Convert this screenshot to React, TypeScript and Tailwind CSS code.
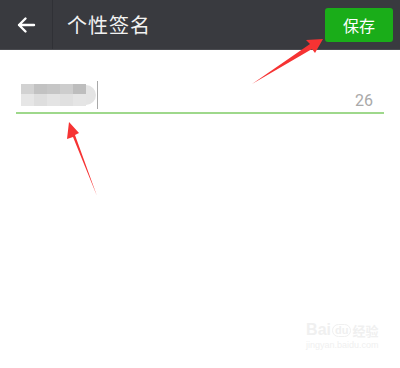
import React from 'react'

const topRow = ['#d2d2d2', '#c2c2c2', '#c6c6c6', '#cdcdcd', '#bdbdbd']
const bottomRow = ['#e6e6e6', '#dedede', '#e4e4e4', '#e0e0e0', '#e5e5e5']

const App = () => {
  return (
    <div className="relative w-[400px] h-[368px] bg-white overflow-hidden font-['Noto_Sans_CJK_SC',sans-serif]">
      <div className="h-[50px] bg-[#393a3f] border-b border-[#4a4b50] flex items-center">
        <div className="w-[53px] h-full flex items-center justify-center border-r border-[#303136]">
          <svg width="20" height="18" viewBox="0 0 20 18" fill="none" stroke="#ffffff" strokeWidth="2.4" strokeLinecap="round" strokeLinejoin="round">
            <path d="M18 9H3M9.5 2.5L3 9l6.5 6.5" />
          </svg>
        </div>
        <span className="ml-[14px] text-[#f2f2f2] text-[20px] tracking-[1px] leading-none">个性签名</span>
        <button className="ml-auto mr-[7px] w-[68px] h-[34px] rounded-[3px] bg-[#1aad19] text-white text-[16px] leading-none">
          保存
        </button>
      </div>

      <div className="mx-[16px] mt-[31px] flex items-end border-b-2 border-[#9ed88b] pb-[3px]">
        <div className="flex items-center ml-[5px]">
          <div className="flex flex-col">
            <div className="flex h-[10px]">
              {topRow.map((c, i) => (
                <div key={i} className="w-[13px]" style={{ backgroundColor: c }} />
              ))}
            </div>
            <div className="flex h-[12px]">
              {bottomRow.map((c, i) => (
                <div key={i} className="w-[13px]" style={{ backgroundColor: c }} />
              ))}
            </div>
          </div>
          <div className="w-[10px] h-[20px] rounded-r-full bg-[#e4e4e4]" />
          <div className="ml-[1px] w-[1px] h-[28px] bg-[#a8a8a8]" />
        </div>
        <span className="ml-auto mr-[11px] text-[16px] leading-none text-[#a9a9a9] font-['Roboto',sans-serif]">26</span>
      </div>

      <svg className="absolute left-0 top-0" width="400" height="368" viewBox="0 0 400 368">
        <path d="M252 84 L310 44 L306 40 L323 39 L315 53 L312 49 Z" fill="#f63333" />
        <path d="M97 196 L73 137 L67 139 L69 122 L79 133 L75 135 Z" fill="#f63333" />
      </svg>

      <div className="absolute left-[306px] top-[322px] flex flex-col items-center text-[#f0f0f0] font-['Liberation_Sans',sans-serif]">
        <div className="flex items-center text-[16px] font-bold leading-none">
          <span>Bai</span>
          <span className="mx-[1px] px-[2px] rounded-full border border-[#f0f0f0] text-[11px]">du</span>
          <span className="text-[13px] font-['Noto_Sans_CJK_SC',sans-serif]">经验</span>
        </div>
        <span className="text-[9px] leading-none mt-[3px]">jingyan.baidu.com</span>
      </div>
    </div>
  )
}

export default App
